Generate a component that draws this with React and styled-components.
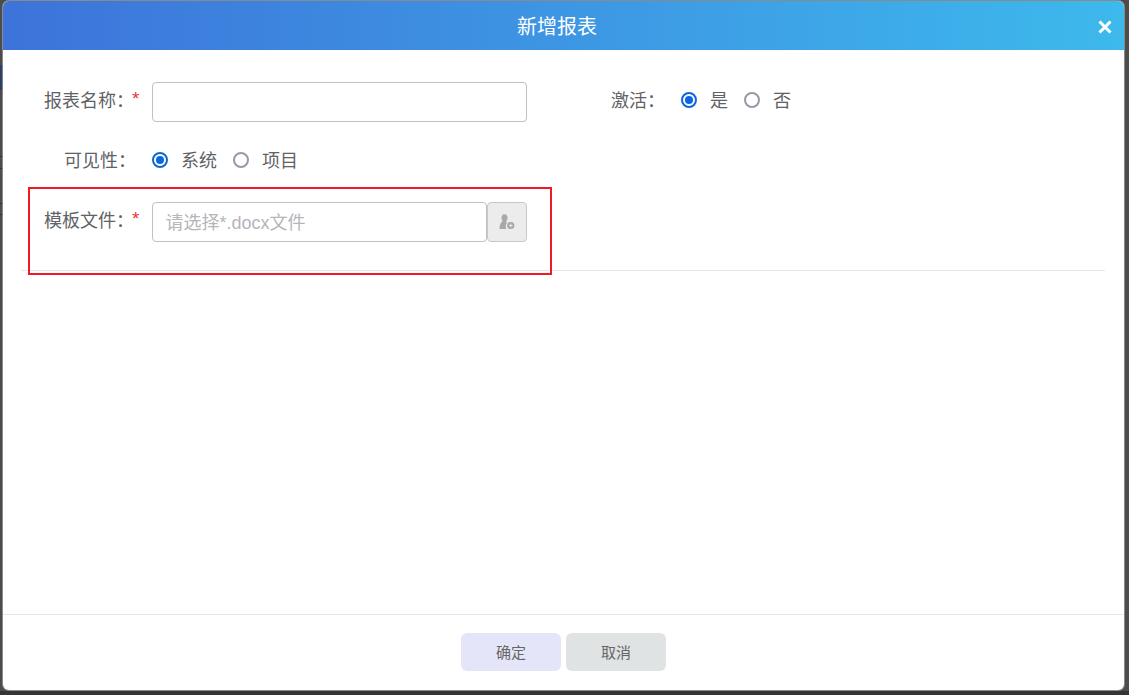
import React from 'react';
import styled, { createGlobalStyle } from 'styled-components';

const GlobalStyle = createGlobalStyle`
  html, body {
    margin: 0;
    height: 100%;
    overflow: hidden;
    background: #4c4c4c;
    font-family: "Liberation Sans", "Noto Sans CJK SC", sans-serif;
  }
`;

const Page = styled.div`
  width: 1129px;
  height: 695px;
  padding: 1px 5px 5px 3px;
  box-sizing: border-box;
  background:
    linear-gradient(#2e3f60, #2e3f60) 0 65px / 3px 25px no-repeat,
    linear-gradient(#333, #333) 0 156px / 3px 1px no-repeat,
    linear-gradient(#333, #333) 0 168px / 3px 1px no-repeat,
    linear-gradient(#333, #333) 0 203px / 3px 1px no-repeat,
    linear-gradient(#333, #333) 0 214px / 3px 1px no-repeat,
    linear-gradient(#353535, #353535) 0 100% / 100% 4px no-repeat,
    #4c4c4c;
`;

const Dialog = styled.div`
  position: relative;
  height: 100%;
  display: flex;
  flex-direction: column;
  background: #fff;
  border-radius: 6px;
  box-shadow: 0 0 0 1px rgba(255, 255, 255, 0.35);
  overflow: hidden;
`;

const Header = styled.div`
  height: 49px;
  flex: none;
  box-sizing: border-box;
  padding-right: 13px;
  display: flex;
  align-items: center;
  justify-content: center;
  position: relative;
  background: linear-gradient(90deg, #3d73da 0%, #3db9ec 100%);
  color: #fff;
  font-size: 20px;
`;

const CloseButton = styled.svg`
  position: absolute;
  right: 12px;
  top: 19px;
  width: 14px;
  height: 14px;
`;

const Body = styled.div`
  flex: 1;
  padding: 32px 19px 0 18px;
`;

const FormArea = styled.div`
  display: flex;
  flex-direction: column;
  gap: 20px;
  padding-bottom: 28px;
  border-bottom: 1px solid #e6e6e6;
`;

const Row = styled.div`
  display: flex;
  align-items: center;
  height: 40px;
`;

const Field = styled.div`
  display: flex;
  align-items: center;
  width: ${p => p.width || 'auto'};
`;

const Label = styled.label`
  width: 131px;
  flex: none;
  box-sizing: border-box;
  padding-bottom: 6px;
  display: flex;
  justify-content: flex-end;
  font-size: 18px;
  color: #606266;
  white-space: nowrap;
`;

const SideLabel = styled.span`
  margin-right: 16px;
  padding-bottom: 6px;
  font-size: 18px;
  color: #606266;
  white-space: nowrap;
`;

const Required = styled.span`
  width: 20px;
  margin-left: -2px;
  padding-top: 3px;
  flex: none;
  text-align: left;
  color: #e8363c;
  font-size: 19px;
  line-height: 1;
`;

const NoMark = styled.span`
  width: 16px;
  flex: none;
`;

const TextInput = styled.input`
  width: 375px;
  height: 40px;
  box-sizing: border-box;
  border: 1px solid #bfbfc4;
  border-radius: 4px;
  padding: 2px 12.5px 0;
  font: inherit;
  font-size: 18px;
  outline: none;
  color: #606266;
  background: #fff;
  ${p => p.joined && `
    width: 335px;
  `}
  &::placeholder {
    color: #b5b5ba;
  }
`;

const InputButton = styled.div`
  width: 40px;
  height: 40px;
  box-sizing: border-box;
  flex: none;
  display: flex;
  align-items: center;
  justify-content: center;
  background: #ececec;
  border: 1px solid #c8c8cc;
  border-radius: 4px;
`;

const RadioGroup = styled.div`
  display: flex;
  align-items: center;
  gap: 16px;
  padding-bottom: 4px;
`;

const RadioItem = styled.div`
  display: flex;
  align-items: center;
  gap: 13px;
  font-size: 18px;
  color: #606266;
`;

const RadioText = styled.span`
  padding-bottom: 2px;
`;

const RadioDot = styled.span`
  width: 16px;
  height: 16px;
  box-sizing: border-box;
  border-radius: 50%;
  border: 2px solid ${p => p.checked ? '#0b67e0' : '#9a98a8'};
  display: flex;
  align-items: center;
  justify-content: center;
  &::after {
    content: '';
    width: 8px;
    height: 8px;
    border-radius: 50%;
    background: ${p => p.checked ? '#0b67e0' : 'transparent'};
  }
`;

const Footer = styled.div`
  height: 76px;
  flex: none;
  box-sizing: border-box;
  border-top: 1px solid #e6e6e6;
  padding-top: 18px;
  display: flex;
  justify-content: center;
  gap: 5px;
`;

const Button = styled.button`
  width: 100px;
  height: 38px;
  padding: 0 0 2px;
  border: none;
  border-radius: 6px;
  background: ${p => p.primary ? '#e5e5f9' : '#dfe3e3'};
  color: #666;
  font: inherit;
  font-size: 15px;
`;

const Highlight = styled.div`
  position: absolute;
  left: 25px;
  top: 186px;
  width: 524px;
  height: 88px;
  box-sizing: border-box;
  border: 2px solid #ed1c24;
  pointer-events: none;
`;

const Radio = ({ checked, children }) => (
  <RadioItem>
    <RadioDot checked={checked} />
    <RadioText>{children}</RadioText>
  </RadioItem>
);

const UploadIcon = () => (
  <svg width="16" height="16" viewBox="0 0 16 16">
    <ellipse cx="5.500" cy="3.800" rx="3" ry="3.500" fill="#aaa8a8" />
    <path d="M4 6.500h3L7.800 9c-1 1.300-1.300 3.500-.6 6H.5c-.2-3.500 1-6.500 3.500-8.500z" fill="#aaa8a8" />
    <circle cx="11.800" cy="11.500" r="3.600" fill="#a4a6a8" />
    <path d="M10 11.500h3.600M11.800 9.700v3.600" stroke="#ececec" strokeWidth="1" />
  </svg>
);

export default function App() {
  return (
    <Page>
      <GlobalStyle />
      <Dialog>
        <Header>
          新增报表
          <CloseButton viewBox="0 0 14 14">
            <path d="M1.500 1.500l11 11M12.500 1.500l-11 11" stroke="#fff" strokeWidth="3" />
          </CloseButton>
        </Header>
        <Body>
          <FormArea>
            <Row>
              <Field width="590px">
                <Label>报表名称：<Required>*</Required></Label>
                <TextInput />
              </Field>
              <Field>
                <SideLabel>激活：</SideLabel>
                <RadioGroup>
                  <Radio checked>是</Radio>
                  <Radio>否</Radio>
                </RadioGroup>
              </Field>
            </Row>
            <Row>
              <Field>
                <Label>可见性：<NoMark /></Label>
                <RadioGroup>
                  <Radio checked>系统</Radio>
                  <Radio>项目</Radio>
                </RadioGroup>
              </Field>
            </Row>
            <Row>
              <Field>
                <Label>模板文件：<Required>*</Required></Label>
                <TextInput joined placeholder="请选择*.docx文件" />
                <InputButton><UploadIcon /></InputButton>
              </Field>
            </Row>
          </FormArea>
        </Body>
        <Footer>
          <Button primary>确定</Button>
          <Button>取消</Button>
        </Footer>
        <Highlight />
      </Dialog>
    </Page>
  );
}
